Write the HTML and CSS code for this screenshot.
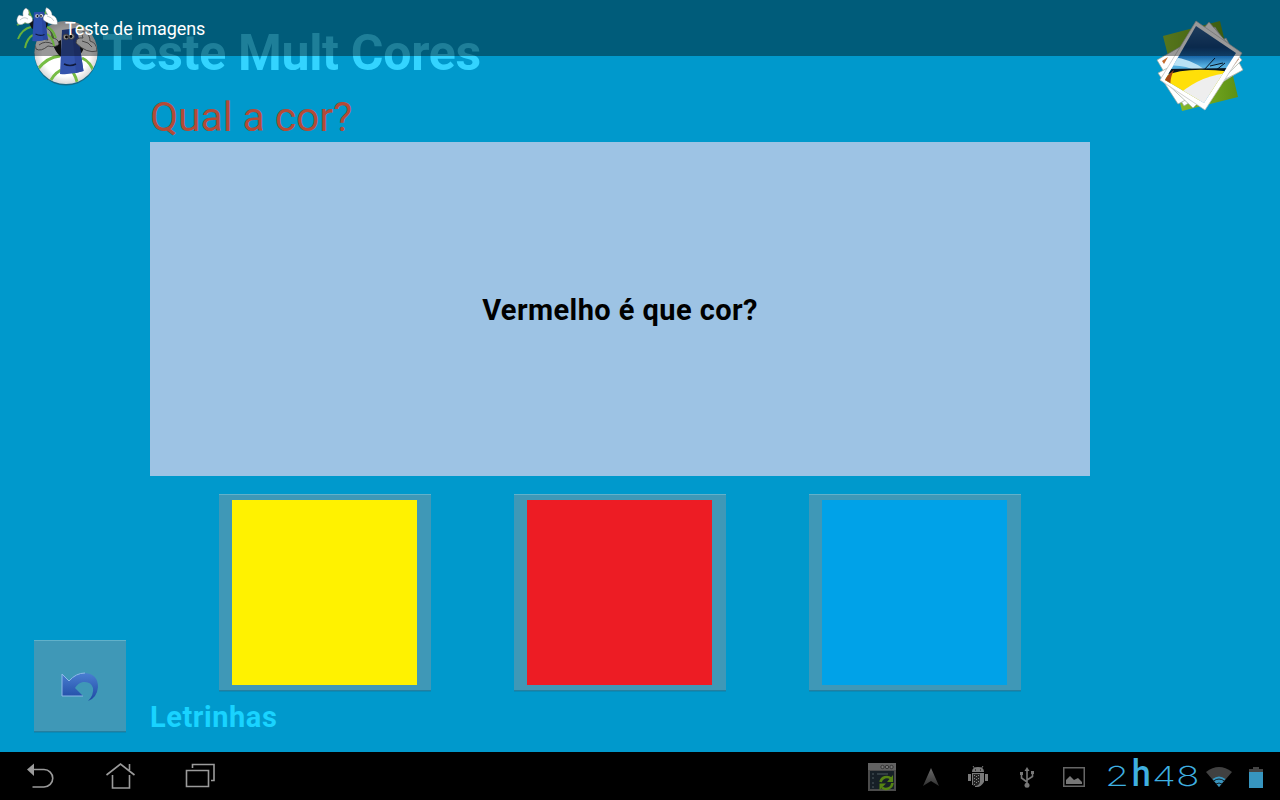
FILE: index.html
```html
<!DOCTYPE html>
<html lang="pt">
<head>
<meta charset="utf-8">
<title>Teste de imagens</title>
<link rel="stylesheet" href="styles.css">
</head>
<body>
<main class="app">
  <div class="action-bar">
    <svg class="bar-icon" viewBox="0 0 42 42">
      <g fill="none" stroke="#68b03b" stroke-width="2">
        <path d="M16 16Q8 14 1 18M15 20Q6 22 2 32M17 28Q11 31 9 41M31 20Q37 22 40 31M31 27Q37 31 38 39M29 7L31 3M12 3L16 12"/>
      </g>
      <path d="M13 15L18 12L18 23Q14 20 13 15ZM28 14L32 15Q32 20 29 22Z" fill="#10151b"/>
      <path d="M18 5.300L28 4.700L31.700 32Q24 35 16.300 34Z" fill="#2d4fae"/>
      <path d="M25.500 5L28 4.700L31.700 32L27 33Z" fill="#2947a0"/>
      <g fill="#fff" stroke="#6d7880" stroke-width=".4">
        <path d="M2 17Q-1 12 3 8L7 9Q6 3 10 1Q14 3 12.500 8Q17 9 16.500 14Q13 18 9 15.500Q6 19 2 17Z"/>
        <path d="M27.500 13Q26 10 29.500 7L31.500 7.500Q28 3 30.500 .5Q36 3 36 8Q42 10 41.500 17.500Q34 18.500 27.500 13Z"/>
        <path d="M4 13Q8 9 12 12M31 9Q36 10 38 14" fill="none"/>
        <circle cx="21" cy="9" r="1.800"/><circle cx="25.300" cy="8.700" r="1.800"/>
      </g>
      <circle cx="21.300" cy="9" r=".9"/><circle cx="25" cy="8.900" r=".9"/>
      <path d="M19.500 27Q24 29.500 28.500 27.500" fill="none" stroke="#101a3c" stroke-width="1.100"/>
    </svg>
    <span class="bar-title">Teste de imagens</span>
  </div>

  <header class="heading">
    <div class="brand">
      <svg class="logo" viewBox="0 0 66 68">
        <defs>
          <clipPath id="disc"><circle cx="33" cy="33.500" r="31.300"/></clipPath>
          <radialGradient id="shade"><stop offset=".75" stop-color="#fff"/><stop offset="1" stop-color="#d9d9d9"/></radialGradient>
        </defs>
        <circle cx="33" cy="35" r="31.600" fill="#176a87"/>
        <circle cx="33" cy="33.500" r="31.600" fill="url(#shade)"/>
        <g clip-path="url(#disc)">
          <path d="M27 37Q14 38 4 51M28 51Q19 56 16 66M40 53Q43 58 45 66M49 39Q58 43 61 54M14 11Q20 14 20 22M44 11Q48 8 51 5" fill="none" stroke="#76bd45" stroke-width="3"/>
          <path d="M20 25L28 21V38Q22 33 20 25ZM44 24L51 25Q51 33 46 36Z" fill="#14181d"/>
          <path d="M29 11L44 9L50.500 52Q39 56 27 55Z" fill="#3555ad"/>
          <path d="M39 10L44 9L50.500 52L43 54Z" fill="#2e4aa0"/>
          <g fill="#f6f6f6" stroke="#666" stroke-width=".9">
            <path d="M3 30Q0 20 8 20L15 21Q8 11 13 9Q19 11 19 19Q25 19 26 25Q23 29 15 27Q8 33 3 30Z"/>
            <path d="M43 24Q43 18 50 19Q47 11 52 13Q57 16 57 22Q64 24 64 32Q54 35 43 24Z"/>
            <path d="M6 26Q12 21 20 25M49 22Q56 23 59 28" fill="none"/>
            <circle cx="33" cy="18" r="2.800"/><circle cx="38.500" cy="17.500" r="2.800"/>
          </g>
          <circle cx="33.500" cy="18" r="1.400"/><circle cx="38" cy="17.500" r="1.400"/>
          <path d="M31 45Q37 48 43 45" fill="none" stroke="#101a3c" stroke-width="1.600"/>
        </g>
      </svg>
      <h1 class="title">Teste Mult Cores</h1>
    </div>
    <svg class="photos" viewBox="0 0 90 94">
      <defs>
        <linearGradient id="sky" x1="0" y1="0" x2="0" y2="1"><stop offset="0" stop-color="#3d6fa4"/><stop offset=".3" stop-color="#12457f"/><stop offset=".4" stop-color="#1a69ab"/><stop offset=".5" stop-color="#55b0e0"/></linearGradient>
        <linearGradient id="leaf"><stop offset="0" stop-color="#91c52f"/><stop offset="1" stop-color="#5d9014"/></linearGradient>
        <clipPath id="shot"><path d="M41 7L81 34L49 84L10 61Z"/></clipPath>
      </defs>
      <path d="M8 17L65 2L83 78L27 92Z" fill="url(#leaf)"/>
      <g fill="#fff" stroke="#9ba89c" stroke-width=".7">
        <path d="M2 41L60 8L87 51L29 87Z"/>
        <path d="M3 54L71 19L88 51L23 85Z"/>
        <path d="M6 59L54 3L87 41L38 89Z"/>
      </g>
      <path d="M7 42L13 38L9 45ZM80 39L84 40L77 49Z" fill="#c56b2e"/>
      <path d="M41 2L87 34L50 91L5 61Z" fill="#fff" stroke="#bbb" stroke-width=".7"/>
      <g clip-path="url(#shot)">
        <rect width="90" height="94" fill="url(#sky)"/>
        <path d="M18 38Q35 40 49 50L44 53Q27 45 13 47Z" fill="#b9e2f5"/>
        <path d="M10 50L81 49V53L10 55Z" fill="#08131d"/>
        <path d="M48 52L60 39M55 47L68 44M60 52L70 44" stroke="#07131f" fill="none"/>
        <path d="M4 61Q22 46 77 53L60 72L25 94Z" fill="#ffdf08"/>
        <path d="M4 64L19 51Q14 61 16 69Z" fill="#a44716"/>
        <path d="M24 75Q48 55 76 54L50 91Z" fill="#eee"/>
      </g>
    </svg>
  </header>

  <div class="content">
    <aside class="side">
      <button class="tile back" aria-label="Voltar">
        <svg class="undo" viewBox="0 0 38 30">
          <defs><linearGradient id="ink" x1="0" y1="0" x2="0" y2="1"><stop offset="0" stop-color="#4a7fd1"/><stop offset="1" stop-color="#1e48a3"/></linearGradient></defs>
          <path d="M1 2L8 9Q15 1 24 1Q37 2 37 15Q36 26 27 29Q33 23 32 16Q30 9 22 10Q17 11 14 16L22 24H1Z" fill="url(#ink)"/>
          <path d="M22 24H1V2L8 9Q15 1 24 1" fill="none" stroke="#8db9e8"/>
        </svg>
      </button>
    </aside>
    <section class="quiz">
      <h2 class="question">Qual a cor?</h2>
      <div class="prompt"><span class="prompt-text">Vermelho é que cor?</span></div>
      <div class="answers">
        <button class="tile answer"><span class="swatch yellow"></span></button>
        <button class="tile answer"><span class="swatch red"></span></button>
        <button class="tile answer"><span class="swatch blue"></span></button>
      </div>
      <p class="footer"><span>Letrinhas</span></p>
    </section>
  </div>
</main>

<nav class="system">
  <div class="nav-keys">
    <svg class="key" viewBox="0 0 32 32"><path d="M9 8.500H20A8.700 8.700 0 0 1 20 26H8.500" fill="none" stroke="#9b9b9b" stroke-width="1.600"/><path d="M3 8.500L10 2.500V15Z" fill="#9b9b9b"/></svg>
    <svg class="key" viewBox="0 0 32 32"><path d="M2.500 14L16.500 3L30.500 14M25.500 9V3M8.500 14V27H25.500V14" fill="none" stroke="#9b9b9b" stroke-width="1.600"/></svg>
    <svg class="key" viewBox="0 0 32 32"><path d="M2.500 9.500H24.500V25.500H2.500ZM8.500 7V3.500H30V19.500H27" fill="none" stroke="#9b9b9b" stroke-width="1.600"/></svg>
  </div>
  <div class="status">
    <svg class="sync" viewBox="0 0 28 28"><path d="M0 0H28V28H0Z" fill="#4b4b4b"/><path d="M0 0H28V7H0Z" fill="#626262"/><path d="M2 8H26V26H2Z" fill="#172027"/><path d="M4 11H6M4 15H6M4 20H6M4 24H6M9 11H20" stroke="#3d474e" stroke-width="1.400"/><g fill="#777" stroke="#353535"><circle cx="14.500" cy="4" r="1.700"/><circle cx="19" cy="4" r="1.700"/><circle cx="23.500" cy="4" r="1.700"/></g><path d="M12.500 19A6.500 6.500 0 0 1 23 15.500M24.500 20A6.500 6.500 0 0 1 14 24.500" fill="none" stroke="#568413" stroke-width="2.600"/><path d="M25 12V19H19ZM11.500 27V20.500H18Z" fill="#568413"/></svg>
    <svg class="arrow" viewBox="0 0 16 19"><defs><linearGradient id="metal" x1="0" y1="0" x2="0" y2="1"><stop offset="0" stop-color="#6b6b6b"/><stop offset="1" stop-color="#303030"/></linearGradient></defs><path d="M8 0L16 18L8 13L0 18Z" fill="url(#metal)"/></svg>
    <svg class="droid" viewBox="0 0 20 22"><g fill="#797979"><path d="M4 6Q4 1 10 1Q16 1 16 6ZM4 7H16V16Q13 21 9 21H7V19H4ZM0 8H3V15H0ZM17 8H20V15H17Z"/></g><path d="M5 0L7 3M15 0L13 3" stroke="#797979"/><path d="M7 4H8M12 4H13" stroke="#000"/><path d="M5 8H12V15Q12 19 8 20H5Z" fill="#242424"/><path d="M6.500 9V20M8.500 10V19M10.500 9V17" stroke="#888" stroke-dasharray="1 2"/></svg>
    <svg class="usb" viewBox="0 0 14 21"><path d="M7 3V18M7 15L1.500 11V7M7 13L12.500 9.500V6" fill="none" stroke="#777" stroke-width="1.600"/><path d="M7 0L9.500 4H4.500ZM0 5H3V8H0ZM11 4H14V7H11Z" fill="#777"/><circle cx="7" cy="18.200" r="2.500" fill="#777"/></svg>
    <svg class="image" viewBox="0 0 22 20"><path d="M.75 .75H21.250V19.250H.75Z" fill="none" stroke="#666" stroke-width="1.500"/><path d="M3 17V13L7 9L11 13L15 11L19 15V17Z" fill="#777"/></svg>
    <div class="clock"><span class="digit two">2</span><span class="hour">h</span><span class="digit minutes">48</span></div>
    <svg class="wifi" viewBox="0 0 26 20"><path d="M0 5Q13 -5 26 5L13 20Z" fill="#414141"/><path d="M6.500 12Q13 7 19.500 12L13 20Z" fill="#3795bf"/><path d="M7.500 14Q13 10 18.500 14M10 17Q13 15 16 17" fill="none" stroke="#111b20" stroke-width="1"/></svg>
    <svg class="battery" viewBox="0 0 14 21"><path d="M0 2H4V0H10V2H14V5H0Z" fill="#444"/><path d="M0 5H14V21H0Z" fill="#3795bf"/></svg>
  </div>
</nav>
</body>
</html>
```

FILE: styles.css
```css
* { box-sizing: border-box; }
body {
  margin: 0;
  width: 1280px;
  height: 800px;
  overflow: hidden;
  display: flex;
  flex-direction: column;
  background: #000;
  font-family: Roboto, "Liberation Sans", sans-serif;
}
h1, h2, p { margin: 0; white-space: nowrap; }
svg { display: block; flex: none; }

.app {
  position: relative;
  height: 752px;
  display: flex;
  flex-direction: column;
  background: #0099cc;
}
.action-bar {
  position: absolute;
  inset: 0 0 auto;
  z-index: 1;
  height: 56px;
  padding-left: 16px;
  display: flex;
  align-items: center;
  gap: 7px;
  background: rgba(0, 0, 0, .4);
}
.bar-icon { width: 42px; height: 42px; }
.bar-title { color: #fff; font-size: 18px; letter-spacing: -.08px; }

.heading {
  height: 94px;
  padding: 19px 35px 0 33px;
  display: flex;
  justify-content: space-between;
  align-items: flex-start;
}
.brand { display: flex; gap: 3px; }
.logo { width: 66px; height: 68px; }
.title { padding-top: 1px; font-size: 50px; line-height: 66px; letter-spacing: -.3px; color: #33d4ff; }
.photos { width: 90px; height: 94px; }

.content { flex: 1; display: grid; grid-template-columns: 150px 940px; }
.side { display: flex; align-items: flex-end; padding: 0 0 20px 34px; }
.tile {
  border: 0;
  padding: 0;
  background: #3f98b7;
  box-shadow: inset 0 1px #61b1ca, inset 0 -1px #247f9f, 0 1px #078bb9;
}
.back {
  width: 92px;
  height: 92px;
  display: grid;
  place-items: center;
  padding-top: 2px;
}
.undo { width: 38px; height: 30px; }
.question { height: 48px; font-size: 41px; line-height: 47px; font-weight: 400; letter-spacing: -.15px; color: #b34b37; }
.prompt {
  height: 334px;
  padding-top: 1px;
  display: grid;
  place-items: center;
  background: #9dc3e4;
}
.prompt-text { font-size: 29px; font-weight: 700; letter-spacing: .42px; color: #000; }
.answers { display: flex; justify-content: center; gap: 83px; padding-top: 18px; }
.answer { width: 212px; height: 197px; padding: 6px 0 0 13px; display: flex; align-items: flex-start; }
.swatch { width: 185px; height: 185px; }
.yellow { background: #fff200; }
.red { background: #ed1c24; }
.blue { background: #00a2e8; }
.footer { font-size: 29px; line-height: 52px; font-weight: 700; letter-spacing: .55px; color: #19d3ff; }

.system { height: 48px; display: flex; justify-content: space-between; background: #000; }
.nav-keys { display: flex; align-items: center; gap: 48px; padding: 2px 0 0 24px; }
.key { width: 32px; height: 32px; }
.status { display: flex; align-items: center; padding: 2px 17px 0 0; }
.sync { width: 28px; height: 28px; margin: 0 27px 0 -1px; }
.arrow { width: 16px; height: 19px; margin-right: 30px; }
.droid { width: 20px; height: 22px; margin: 0 32px 0 -1px; }
.usb { width: 14px; height: 21px; margin-right: 29px; }
.image { width: 22px; height: 20px; margin-right: 20px; }
.clock {
  width: 96px;
  height: 48px;
  display: flex;
  align-items: baseline;
  line-height: 42px;
  color: #3fb0e0;
  white-space: nowrap;
}
.digit { font-family: Inter, Roboto, sans-serif; font-size: 27.5px; font-weight: 250; transform: scaleX(1.42); transform-origin: left; }
.two { width: 26px; }
.hour { width: 21px; font-size: 37px; font-weight: 500; transform: scaleX(.92); }
.wifi { width: 26px; height: 20px; margin: 0 17px 0 5px; }
.battery { width: 14px; height: 21px; }
```
